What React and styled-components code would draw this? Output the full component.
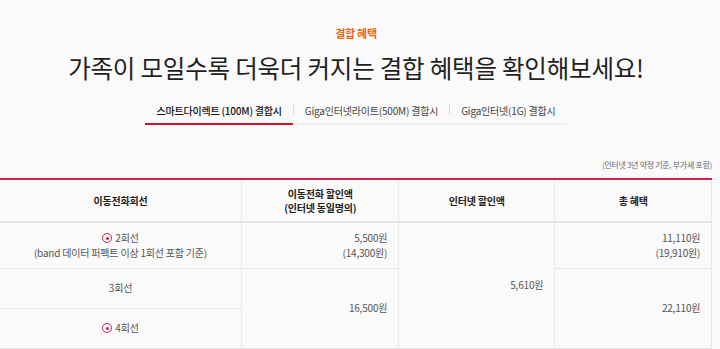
import React from "react";
import styled, { createGlobalStyle } from "styled-components";

const GlobalStyle = createGlobalStyle`
  html, body {
    margin: 0;
    padding: 0;
    background: #fafafa;
    font-family: "Noto Sans CJK KR", "Noto Sans", sans-serif;
    color: #333;
  }
`;

const Page = styled.div`
  display: flex;
  flex-direction: column;
  align-items: center;
  padding-top: 25px;
  padding-right: 8px;
`;

const Eyebrow = styled.div`
  font-size: 11px;
  line-height: 16px;
  font-weight: 700;
  color: #ec6316;
  letter-spacing: -0.3px;
`;

const Title = styled.h2`
  margin: 9px 0 0;
  font-size: 24.5px;
  line-height: 36px;
  font-weight: 400;
  color: #1f1f1f;
  letter-spacing: -0.2px;
`;

const Tabs = styled.div`
  display: flex;
  align-items: stretch;
  margin-top: 12px;
  border-bottom: 2px solid #efefef;
`;

const Tab = styled.div`
  padding: 6px 11px 5px;
  font-size: 10px;
  line-height: 14px;
  letter-spacing: -0.2px;
  color: ${(p) => (p.$active ? "#111" : "#444")};
  font-weight: ${(p) => (p.$active ? 500 : 400)};
  border-bottom: 2px solid ${(p) => (p.$active ? "#d1102d" : "transparent")};
  margin-bottom: -2px;
  white-space: nowrap;
`;

const Sep = styled.span`
  align-self: center;
  width: 1px;
  height: 9px;
  margin-bottom: 2px;
  background: #d8d8d8;
`;

const Note = styled.div`
  align-self: flex-end;
  margin-top: 34px;
  font-size: 8px;
  line-height: 12px;
  color: #666;
  letter-spacing: -0.3px;
`;

const Table = styled.table`
  width: 712px;
  margin-top: 7px;
  border-collapse: collapse;
  table-layout: fixed;
  border-top: 2px solid #d41f4b;
`;

const Th = styled.th`
  height: 41px;
  padding: 0;
  font-size: 10px;
  line-height: 14px;
  font-weight: 700;
  color: #222;
  letter-spacing: -0.2px;
  border-bottom: 2px solid #e6e6e6;
  border-right: 1px solid #e9e9e9;
`;

const Td = styled.td`
  height: ${(p) => p.$h || 39}px;
  padding: 0 ${(p) => (p.$num ? "11px" : "0")} 0 0;
  text-align: ${(p) => (p.$num ? "right" : "center")};
  vertical-align: middle;
  font-size: 10px;
  line-height: 14.5px;
  color: #555;
  letter-spacing: -0.2px;
  border-bottom: 1px solid #e6e6e6;
  border-right: 1px solid #e9e9e9;
`;

const Line = styled.div`
  white-space: nowrap;
`;

const Dot = styled.span`
  display: inline-block;
  position: relative;
  width: 10px;
  height: 10px;
  margin-right: 3px;
  vertical-align: -1px;
  border: 1px solid #d41f4b;
  border-radius: 50%;
  box-sizing: border-box;

  &::after {
    content: "";
    position: absolute;
    left: 2.5px;
    top: 2.5px;
    width: 3px;
    height: 3px;
    border-radius: 50%;
    background: #d41f4b;
  }
`;

const tabs = [
  "스마트다이렉트 (100M) 결합시",
  "Giga인터넷라이트(500M) 결합시",
  "Giga인터넷(1G) 결합시",
];

export default function App() {
  return (
    <>
      <GlobalStyle />
      <Page>
        <Eyebrow>결합 혜택</Eyebrow>
        <Title>가족이 모일수록 더욱더 커지는 결합 혜택을 확인해보세요!</Title>
        <Tabs>
          {tabs.map((t, i) => (
            <React.Fragment key={t}>
              {i > 0 && <Sep />}
              <Tab $active={i === 0}>{t}</Tab>
            </React.Fragment>
          ))}
        </Tabs>
        <Note>(인터넷 3년 약정 기준, 부가세 포함)</Note>
        <Table>
          <colgroup>
            <col style={{ width: 242 }} />
            <col style={{ width: 157 }} />
            <col style={{ width: 156 }} />
            <col style={{ width: 157 }} />
          </colgroup>
          <thead>
            <tr>
              <Th>이동전화회선</Th>
              <Th>
                <Line>이동전화 할인액</Line>
                <Line>(인터넷 동일명의)</Line>
              </Th>
              <Th>인터넷 할인액</Th>
              <Th>총 혜택</Th>
            </tr>
          </thead>
          <tbody>
            <tr>
              <Td $h={45}>
                <Line>
                  <Dot />
                  2회선
                </Line>
                <Line>(band 데이터 퍼펙트 이상 1회선 포함 기준)</Line>
              </Td>
              <Td $num>
                <Line>5,500원</Line>
                <Line>(14,300원)</Line>
              </Td>
              <Td $num rowSpan={3}>
                5,610원
              </Td>
              <Td $num>
                <Line>11,110원</Line>
                <Line>(19,910원)</Line>
              </Td>
            </tr>
            <tr>
              <Td>3회선</Td>
              <Td $num rowSpan={2}>
                16,500원
              </Td>
              <Td $num rowSpan={2}>
                22,110원
              </Td>
            </tr>
            <tr>
              <Td>
                <Dot />
                4회선
              </Td>
            </tr>
          </tbody>
        </Table>
      </Page>
    </>
  );
}
